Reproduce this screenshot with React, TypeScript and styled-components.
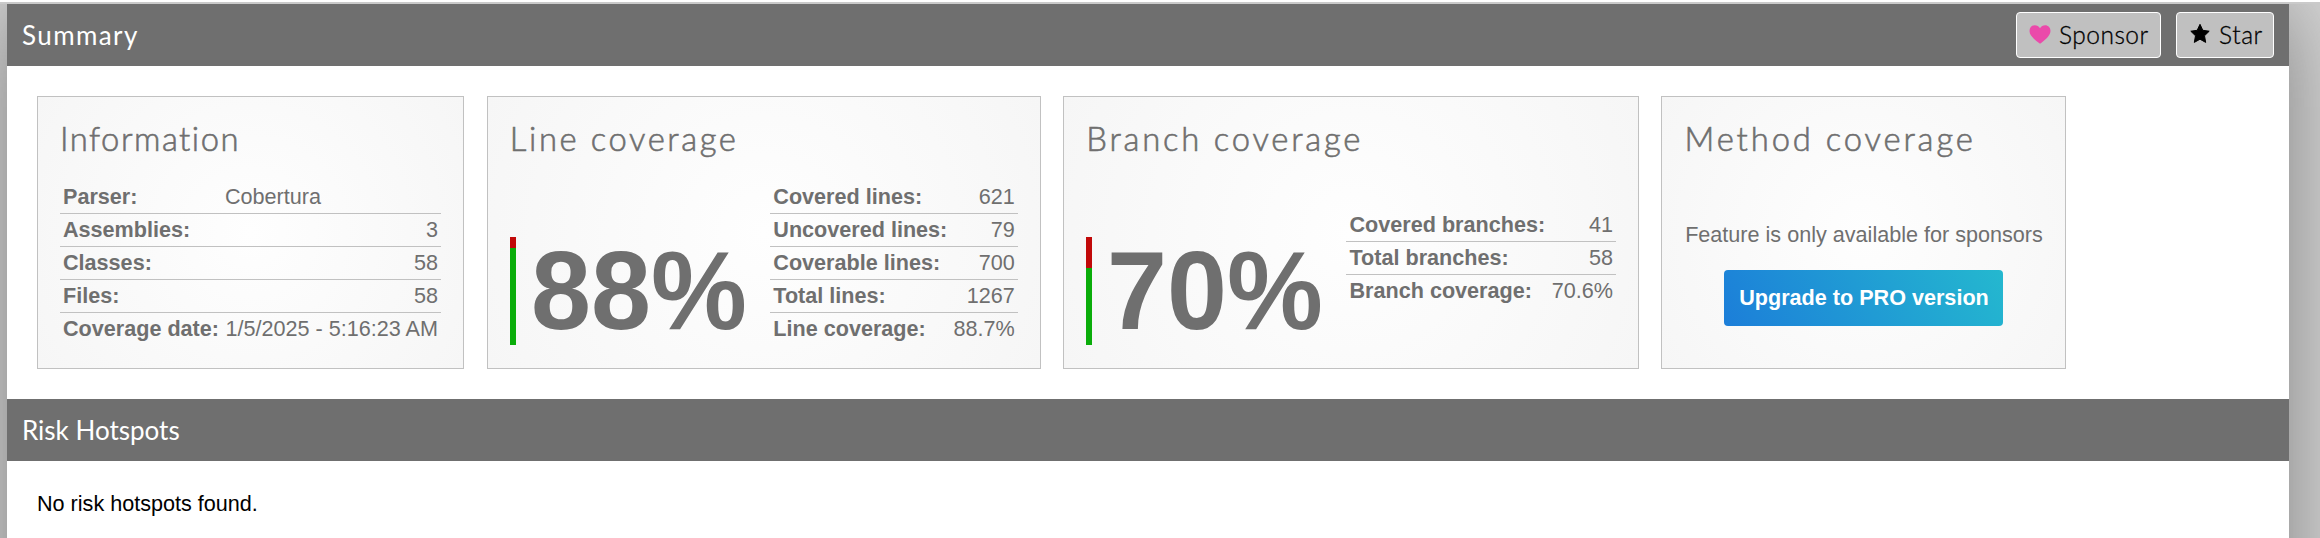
import React from "react";
import styled, { createGlobalStyle } from "styled-components";

const GlobalStyle = createGlobalStyle`
  * { box-sizing: border-box; }
  html { background: #fff; }
  body {
    margin: 0;
    padding-top: 2px;
    height: 538px;
    overflow: hidden;
    font-family: "Liberation Sans", Arial, sans-serif;
    font-size: 21.6px;
    color: #000;
  }
`;

const Backdrop = styled.div`
  height: 536px;
  padding: 0 31px 0 7px;
  border-top: 2px solid #cacaca;
  background: #d6d6d6;
  overflow: hidden;
`;

const Page = styled.main`
  height: 700px;
  background: #fff;
  box-shadow: 0 0 90px 0 #7d7d7d;
`;

const SectionBar = styled.h1`
  display: flex;
  align-items: center;
  justify-content: space-between;
  height: 62px;
  margin: 0;
  padding: 0 15px;
  background: #6f6f6f;
  color: #fff;
  font: 400 26px Lato, sans-serif;
`;

const SectionTitle = styled.span<{ $tracking: number }>`
  letter-spacing: ${(p) => p.$tracking}px;
`;

const Actions = styled.div`
  display: flex;
  gap: 15px;
`;

const ActionButton = styled.a<{ $width: number; $tracking: number }>`
  display: flex;
  align-items: center;
  gap: 8px;
  width: ${(p) => p.$width}px;
  height: 46px;
  padding: 0 0 2px 12px;
  border: 1px solid #fff;
  border-radius: 4px;
  background: #c0c0c0;
  color: #000;
  font: 300 24.5px Lato, sans-serif;
  -webkit-text-stroke: 0.3px #000;
  letter-spacing: ${(p) => p.$tracking}px;
  white-space: nowrap;

  svg { flex: none; }
`;

const Cards = styled.section`
  display: flex;
  gap: 22.5px;
  height: 333px;
  padding: 30px;
`;

const Card = styled.article<{ $width: number }>`
  width: ${(p) => p.$width}px;
  height: 273px;
  padding: 0 22px;
  border: 1px solid #c1c1c1;
  background: radial-gradient(circle, #fefefe, #f6f6f6);
  color: #6f6f6f;
`;

const CardTitle = styled.h2<{ $tracking: number }>`
  height: 83px;
  margin: 0;
  padding-top: 21px;
  font: 300 32.8px/42px Lato, sans-serif;
  -webkit-text-stroke: 0.6px #6f6f6f;
  letter-spacing: ${(p) => p.$tracking}px;
  white-space: nowrap;
`;

const CardBody = styled.div`
  display: flex;
  justify-content: space-between;
  align-items: flex-start;
  height: 166px;
`;

const Table = styled.div<{ $width: string; $offset?: number }>`
  width: ${(p) => p.$width};
  margin-top: ${(p) => p.$offset ?? 0}px;
`;

const Row = styled.div`
  display: flex;
  justify-content: space-between;
  height: 33px;
  padding: 0 3px;
  line-height: 33px;
  white-space: nowrap;

  & + & { border-top: 1px solid #c1c1c1; line-height: 32px; }
`;

const Label = styled.b`
  font-weight: 700;
`;

const Value = styled.span<{ $column?: number }>`
  width: ${(p) => (p.$column ? `${p.$column}px` : "auto")};
`;

const Gauge = styled.div`
  display: flex;
  gap: 15px;
  margin-top: 57px;
`;

const GaugeBar = styled.div<{ $uncovered: number }>`
  width: 6px;
  height: 108px;
  background: linear-gradient(#c10909 ${(p) => p.$uncovered}px, #0aad0a ${(p) => p.$uncovered}px);
`;

const Percent = styled.div`
  width: 216px;
  font-size: 112px;
  font-weight: 700;
  line-height: 108px;
  transform: scaleX(0.963);
  transform-origin: left;
`;

const ProNotice = styled.div`
  display: flex;
  flex-direction: column;
  align-items: center;
  padding-top: 42px;
  line-height: 25px;
  white-space: nowrap;
`;

const ProButton = styled.a`
  width: 279px;
  height: 56px;
  margin-top: 23px;
  border-radius: 4px;
  background: linear-gradient(60deg, #1c7ed9, #24b8cf);
  color: #fff;
  font-weight: 700;
  line-height: 56px;
  text-align: center;
`;

const Message = styled.p`
  margin: 0;
  padding: 30px;
  line-height: 26px;
`;

type Entry = [string, string];

const information: Entry[] = [
  ["Parser:", "Cobertura"],
  ["Assemblies:", "3"],
  ["Classes:", "58"],
  ["Files:", "58"],
  ["Coverage date:", "1/5/2025 - 5:16:23 AM"],
];

const lines: Entry[] = [
  ["Covered lines:", "621"],
  ["Uncovered lines:", "79"],
  ["Coverable lines:", "700"],
  ["Total lines:", "1267"],
  ["Line coverage:", "88.7%"],
];

const branches: Entry[] = [
  ["Covered branches:", "41"],
  ["Total branches:", "58"],
  ["Branch coverage:", "70.6%"],
];

function Facts({ rows, width, offset }: { rows: Entry[]; width: string; offset?: number }) {
  return (
    <Table $width={width} $offset={offset}>
      {rows.map(([label, value]) => (
        <Row key={label}>
          <Label>{label}</Label>
          <Value $column={value === "Cobertura" ? 213 : undefined}>{value}</Value>
        </Row>
      ))}
    </Table>
  );
}

const Heart = () => (
  <svg width="22" height="22" viewBox="0 0 22 22" fill="#ea4aaa">
    <path d="M11 20.8 C8.5 18.4 .5 13.6 .5 7.9 C.5 4.6 2.9 2.3 5.8 2.3 C8 2.3 9.9 3.4 11 5.2 C12.1 3.4 14 2.3 16.2 2.3 C19.1 2.3 21.5 4.6 21.5 7.9 C21.5 13.6 13.5 18.4 11 20.8Z" />
  </svg>
);

const Star = () => (
  <svg width="22" height="22" viewBox="0 0 22 22" fill="#000" stroke="#000" strokeWidth="1" strokeLinejoin="round">
    <path d="M11 1.3 13.8 7.3 20.2 8.2 15.5 12.8 16.7 19.4 11 16.2 5.3 19.4 6.5 12.8 1.8 8.2 8.2 7.3Z" />
  </svg>
);

export default function App() {
  return (
    <>
      <GlobalStyle />
      <Backdrop>
        <Page>
          <SectionBar>
            <SectionTitle $tracking={1.4}>Summary</SectionTitle>
            <Actions>
              <ActionButton $width={145} $tracking={0.5}><Heart />Sponsor</ActionButton>
              <ActionButton $width={98} $tracking={0.6}><Star />Star</ActionButton>
            </Actions>
          </SectionBar>
          <Cards>
            <Card $width={427.3}>
              <CardTitle $tracking={1.5}>Information</CardTitle>
              <Facts rows={information} width="381px" />
            </Card>
            <Card $width={554}>
              <CardTitle $tracking={2.6}>Line coverage</CardTitle>
              <CardBody>
                <Gauge><GaugeBar $uncovered={11} /><Percent>88%</Percent></Gauge>
                <Facts rows={lines} width="247.5px" />
              </CardBody>
            </Card>
            <Card $width={575.7}>
              <CardTitle $tracking={2.8}>Branch coverage</CardTitle>
              <CardBody>
                <Gauge><GaugeBar $uncovered={31} /><Percent>70%</Percent></Gauge>
                <Facts rows={branches} width="269.5px" offset={28} />
              </CardBody>
            </Card>
            <Card $width={405}>
              <CardTitle $tracking={2.9}>Method coverage</CardTitle>
              <ProNotice>
                Feature is only available for sponsors
                <ProButton>Upgrade to PRO version</ProButton>
              </ProNotice>
            </Card>
          </Cards>
          <SectionBar>
            <SectionTitle $tracking={0}>Risk Hotspots</SectionTitle>
          </SectionBar>
          <Message>No risk hotspots found.</Message>
        </Page>
      </Backdrop>
    </>
  );
}
